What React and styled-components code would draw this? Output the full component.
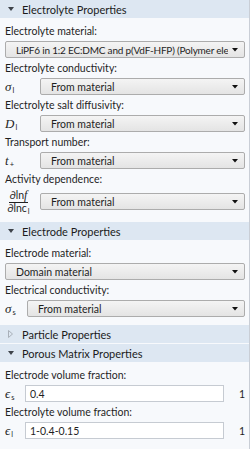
import React from "react";
import styled, { createGlobalStyle } from "styled-components";

const GlobalStyle = createGlobalStyle`
  html, body {
    margin: 0;
    padding: 0;
    background: #f7f9fc;
  }
  body {
    font-family: Lato, "Open Sans", sans-serif;
    color: #1f1f1f;
  }
`;

export default function App() {
    return (
        <>
            <GlobalStyle />
            <Panel>
                <Section title="Electrolyte Properties" sym={27}>
                    <Field label="Electrolyte material:">
                        <Select tight>LiPF6 in 1:2 EC:DMC and p(VdF-HFP) (Polymer ele</Select>
                    </Field>
                    <Field label="Electrolyte conductivity:" sym={<Sym>σ<Sub>l</Sub></Sym>}>
                        <Select>From material</Select>
                    </Field>
                    <Field label="Electrolyte salt diffusivity:" sym={<Sym>D<Sub>l</Sub></Sym>}>
                        <Select>From material</Select>
                    </Field>
                    <Field label="Transport number:" sym={<Sym>t<Sub>+</Sub></Sym>}>
                        <Select>From material</Select>
                    </Field>
                    <Field
                        label="Activity dependence:"
                        tall
                        sym={
                            <Fraction>
                                <Num>∂ln<Ital>f</Ital></Num>
                                <Den>∂lnc<Sub>l</Sub></Den>
                            </Fraction>
                        }
                    >
                        <Select>From material</Select>
                    </Field>
                </Section>
                <Section title="Electrode Properties" sym={14}>
                    <Field label="Electrode material:">
                        <Select>Domain material</Select>
                    </Field>
                    <Field label="Electrical conductivity:" sym={<Sym>σ<Sub>s</Sub></Sym>}>
                        <Select>From material</Select>
                    </Field>
                </Section>
                <Section title="Particle Properties" collapsed />
                <Section title="Porous Matrix Properties" sym={12}>
                    <Field label="Electrode volume fraction:" sym={<Sym>ϵ<Sub>s</Sub></Sym>} unit="1">
                        <Input>0.4</Input>
                    </Field>
                    <Field label="Electrolyte volume fraction:" sym={<Sym>ϵ<Sub>l</Sub></Sym>} unit="1">
                        <Input>1-0.4-0.15</Input>
                    </Field>
                </Section>
            </Panel>
        </>
    );
}

function Section({ title, collapsed, sym, children }) {
    return (
        <section>
            <Header>
                <Toggle>
                    {collapsed ? (
                        <svg width="5" height="8" viewBox="0 0 5 8">
                            <path d="M0.5 0.5 L4.5 4 L0.5 7.5 Z" fill="none" stroke="#a9b0b9" strokeWidth="1" />
                        </svg>
                    ) : (
                        <svg width="6" height="4" viewBox="0 0 6 4">
                            <path d="M0 0 H6 L3 4 Z" fill="#3e434a" />
                        </svg>
                    )}
                </Toggle>
                {title}
            </Header>
            {!collapsed && (
                <Body>
                    {React.Children.map(children, (child) => React.cloneElement(child, { symWidth: sym }))}
                </Body>
            )}
        </section>
    );
}

function Field({ label, sym, unit, tall, symWidth, children }) {
    return (
        <FieldBox>
            <Label>{label}</Label>
            <Row $sym={sym ? symWidth : 0} $unit={!!unit} $tall={tall}>
                {sym && <SymCell>{sym}</SymCell>}
                {children}
                {unit && <Unit>{unit}</Unit>}
            </Row>
        </FieldBox>
    );
}

function Select({ tight, children }) {
    return (
        <SelectBox $tight={tight}>
            <SelectText>{children}</SelectText>
            <svg width="6" height="4" viewBox="0 0 6 4">
                <path d="M0 0 H6 L3 3.5 Z" fill="#111" />
            </svg>
        </SelectBox>
    );
}

const Panel = styled.div`
    width: 249px;
    height: 449px;
    overflow: hidden;
    border-right: 1px solid #c9ced6;
    background: #f7f9fc;
`;

const Header = styled.div`
    height: 19px;
    box-sizing: border-box;
    display: flex;
    align-items: center;
    background: #dde7f2;
    border-bottom: 1px solid #f7f9fc;
    font-size: 11px;
    color: #1b1b1b;
    white-space: nowrap;
`;

const Toggle = styled.span`
    width: 22px;
    display: flex;
    align-items: center;
    padding-left: 8px;
    box-sizing: border-box;
`;

const Body = styled.div`
    display: flex;
    flex-direction: column;
    gap: 3px;
    padding: 5px 4px 8px 5px;
`;

const FieldBox = styled.div`
    display: flex;
    flex-direction: column;
    gap: 3px;
`;

const Label = styled.div`
    height: 14px;
    line-height: 14px;
    font-size: 10.5px;
    white-space: nowrap;
`;

const Row = styled.div`
    display: grid;
    grid-template-columns: ${(p) => (p.$sym ? `${p.$sym}px ` : "")}minmax(0, 1fr)${(p) => (p.$unit ? " 13px" : "")};
    column-gap: 8px;
    align-items: center;
    height: ${(p) => (p.$tall ? "25px" : "17px")};
`;

const SymCell = styled.div`
    display: flex;
    align-items: center;
    height: 100%;
`;

const Sym = styled.span`
    font-family: "Liberation Serif", "DejaVu Serif", serif;
    font-style: italic;
    font-size: 13px;
    line-height: 13px;
    height: 13px;
    white-space: nowrap;
`;

const Sub = styled.span`
    font-family: Lato, sans-serif;
    font-style: normal;
    font-size: 7.5px;
    line-height: 7px;
    position: relative;
    top: 2px;
    margin-left: 1px;
`;

const Fraction = styled.span`
    display: inline-flex;
    flex-direction: column;
    align-items: center;
    font-family: Lato, sans-serif;
    font-size: 10.5px;
    line-height: 11px;
    width: 27px;
`;

const Num = styled.span`
    border-bottom: 1px solid #222;
    padding: 0 1px 1px;
    white-space: nowrap;
`;

const Den = styled.span`
    white-space: nowrap;
`;

const Ital = styled.span`
    font-family: "Liberation Serif", serif;
    font-style: italic;
    font-size: 12px;
`;

const SelectBox = styled.div`
    height: 17px;
    box-sizing: border-box;
    display: flex;
    align-items: center;
    gap: 4px;
    padding: 0 6px 0 10px;
    border: 1px solid #acacac;
    border-radius: 2px;
    background: linear-gradient(#f4f4f4, #e4e4e4);
    font-size: ${(p) => (p.$tight ? "10px" : "10.5px")};
    letter-spacing: ${(p) => (p.$tight ? "-0.2px" : "normal")};
    min-width: 0;
`;

const SelectText = styled.span`
    flex: 1;
    overflow: hidden;
    white-space: nowrap;
`;

const Input = styled.div`
    height: 17px;
    box-sizing: border-box;
    display: flex;
    align-items: center;
    padding: 0 4px;
    border: 1px solid #c6cbd2;
    background: #fff;
    font-size: 10.5px;
`;

const Unit = styled.span`
    justify-self: end;
    font-size: 10.5px;
`;
